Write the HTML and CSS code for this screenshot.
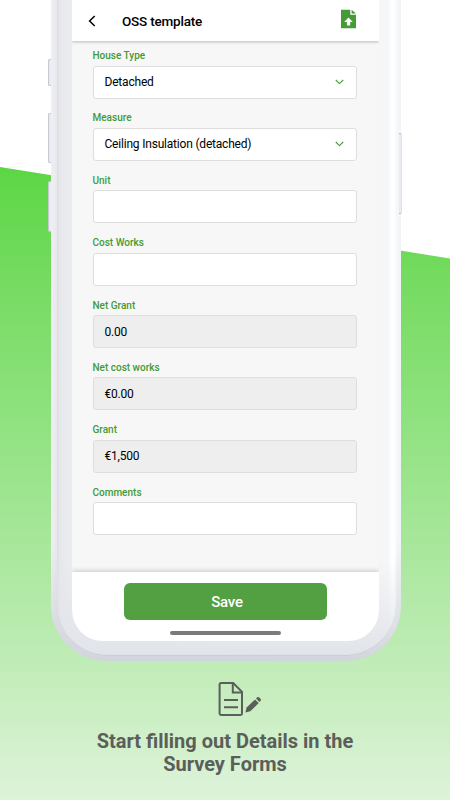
FILE: index.html
```
<!DOCTYPE html>
<html lang="en">

<head>
    <meta charset="UTF-8">
    <title>OSS template</title>
    <link rel="stylesheet" href="styles.css">
</head>

<body>
    <div class="page">
        <div class="backdrop"></div>
        <div class="phone">
            <i class="key key-mute"></i>
            <i class="key key-up"></i>
            <i class="key key-down"></i>
            <i class="key key-power"></i>
            <div class="bezel">
                <div class="screen">
                    <header class="topbar">
                        <svg class="back" width="8" height="12" viewBox="0 0 8 12"><path d="M6.7 1L1.6 6l5.1 5" fill="none" stroke="#000" stroke-width="1.5"/></svg>
                        <h1>OSS template</h1>
                        <svg class="upload" width="16" height="20" viewBox="0 0 16 20">
                            <path d="M0 .7h9.3v5.1H15V19.3H0z" fill="#469b38"/>
                            <path d="M10.6.7L15 4.6h-4.4z" fill="#469b38"/>
                            <path d="M7.5 8.6l4.3 4.4H9.2v3.5H5.9V13H3.2z" fill="#fff"/>
                        </svg>
                    </header>
                    <main class="form">
                        <div class="field">
                            <label>House Type</label>
                            <div class="input">Detached <svg width="9" height="6" viewBox="0 0 9 6"><path d="M.8 1l3.7 3.6L8.2 1"/></svg></div>
                        </div>
                        <div class="field">
                            <label>Measure</label>
                            <div class="input">Ceiling Insulation (detached) <svg width="9" height="6" viewBox="0 0 9 6"><path d="M.8 1l3.7 3.6L8.2 1"/></svg></div>
                        </div>
                        <div class="field">
                            <label>Unit</label>
                            <div class="input"></div>
                        </div>
                        <div class="field">
                            <label>Cost Works</label>
                            <div class="input"></div>
                        </div>
                        <div class="field">
                            <label>Net Grant</label>
                            <div class="input disabled">0.00</div>
                        </div>
                        <div class="field">
                            <label>Net cost works</label>
                            <div class="input disabled">€0.00</div>
                        </div>
                        <div class="field">
                            <label>Grant</label>
                            <div class="input disabled">€1,500</div>
                        </div>
                        <div class="field">
                            <label>Comments</label>
                            <div class="input"></div>
                        </div>
                    </main>
                    <footer class="bottombar">
                        <button class="save">Save</button>
                        <div class="home"></div>
                    </footer>
                </div>
            </div>
        </div>
        <div class="caption">
            <svg width="44" height="36" viewBox="0 0 44 36">
                <g fill="none" stroke="#5b5f5b" stroke-width="2">
                    <path d="M3 2h12.2L24 10.8V32.6a1.4 1.4 0 0 1-1.4 1.4H3a1.4 1.4 0 0 1-1.4-1.4V3.4A1.4 1.4 0 0 1 3 2z"/>
                    <path d="M14.8 2v9.5H24M6 19h14M6 26.3h14"/>
                </g>
                <path d="M37 18.4l3.7 3.7-8.4 8.1-4.9 1.2 1.2-4.8z" fill="#5b5f5b"/>
                <path d="M38 17.5l1.2-1.2q.9-.8 1.8 0l1.7 1.8q.8.8 0 1.6l-1.3 1.3z" fill="#5b5f5b"/>
            </svg>
            <h2>Start filling out Details in the<br>Survey Forms</h2>
        </div>
    </div>
</body>

</html>
```

FILE: styles.css
```
* {
    margin: 0;
    padding: 0;
    box-sizing: border-box;
}

body {
    background: #fff;
    font-family: Roboto, "Liberation Sans", sans-serif;
    overflow: hidden;
}

.page {
    position: relative;
    width: 450px;
    height: 800px;
}

/* green slope behind the phone */
.backdrop {
    position: absolute;
    inset: 167px 0 0;
    background: linear-gradient(#5cd645, #78dc64 20%, #a3e696 56%, #c4edbb 81%, #def3da);
    clip-path: polygon(0 0, 50px 8px, 400px 83.5px, 100% 91.5px, 100% 100%, 0 100%);
}

.phone {
    position: relative;
    width: 350px;
    height: 660.5px;
    margin-left: 50.5px;
    padding: 0 5px 5px 6px;
    border-radius: 0 0 55px 55px;
    background: linear-gradient(rgba(208, 212, 220, 0) 82%, #d2d5dc), linear-gradient(90deg, #eff0f3, #e9e9ed 6px, #fafcfd 98%, #eff4f6);
}

.key {
    position: absolute;
    left: -2.5px;
    width: 3px;
    background: #e8ebf1;
    border: 1px solid #c5c8d0;
    border-right: 0;
    border-radius: 2px 0 0 2px;
}

.key-mute {
    top: 59px;
    height: 27px;
}

.key-up {
    top: 113px;
    height: 50px;
}

.key-down {
    top: 181px;
    height: 51px;
}

.key-power {
    left: 348.5px;
    top: 133px;
    height: 81px;
    border: 1px solid #b5b6bb;
    border-left: 0;
    border-right-color: #dfe1e6;
    border-radius: 0 2px 2px 0;
}

.bezel {
    height: 100%;
    padding: 0 16px 14.5px 15px;
    border-radius: 0 0 50px 50px;
    background: linear-gradient(rgba(224, 227, 233, 0) 85%, #e1e4ea), linear-gradient(90deg, #dfdfe3, #e8e9ed 4px, #ebecf0 15px, #f5f6f7 322px, #f6f7f8 331px, #fff 335px);
    box-shadow: inset 0 -1px 1px #c8cbd1;
}

.screen {
    display: flex;
    flex-direction: column;
    height: 100%;
    width: 307px;
    border-radius: 0 0 31px 31px;
    background: #f7f7f7;
    overflow: hidden;
}

.topbar {
    display: flex;
    flex: none;
    align-items: center;
    height: 41px;
    padding: 0 22px 0 16px;
    background: #fff;
    box-shadow: 0 1px 3px rgba(0, 0, 0, .25);
}

.topbar h1 {
    margin-left: 26.5px;
    font-size: 13.5px;
    font-weight: 500;
    line-height: 20px;
    letter-spacing: -.2px;
}

.upload {
    margin: -4px 0 0 auto;
}

.form {
    flex: 1;
    padding: 7px 22px 0 21px;
}

.field {
    height: 62.4px;
}

.field label {
    display: block;
    height: 17.5px;
    font-size: 10px;
    font-weight: 500;
    line-height: 15px;
    color: #439a35;
}

.input {
    display: flex;
    align-items: center;
    justify-content: space-between;
    height: 33px;
    padding: 0 12px 0 11px;
    border: 1px solid #dedede;
    border-radius: 3px;
    background: #fff;
    font-size: 12px;
    letter-spacing: -.2px;
    color: #000;
}

.input svg {
    fill: none;
    stroke: #469b38;
    stroke-width: 1.1;
}

.disabled {
    background: #eee;
}

.bottombar {
    flex: none;
    height: 69.5px;
    padding-top: 11.5px;
    background: #fff;
    box-shadow: 0 -1px 5px rgba(0, 0, 0, .2);
}

.save {
    display: block;
    width: 203px;
    height: 36.5px;
    margin: 0 auto 11px;
    padding: 1px 0 0 4px;
    border: 0;
    border-radius: 6px;
    background: #53a043;
    font: 500 15px Roboto, sans-serif;
    letter-spacing: -.2px;
    color: #fff;
}

.home {
    width: 111px;
    height: 4px;
    margin: 0 auto;
    border-radius: 2px;
    background: #7b7b7b;
}

.caption {
    position: relative;
    padding-top: 20.5px;
    text-align: center;
    color: #5b5f5b;
}

.caption svg {
    display: block;
    margin-left: 217.5px;
}

.caption h2 {
    margin-top: 12.5px;
    font-size: 20px;
    font-weight: 700;
    line-height: 23.5px;
}
```
